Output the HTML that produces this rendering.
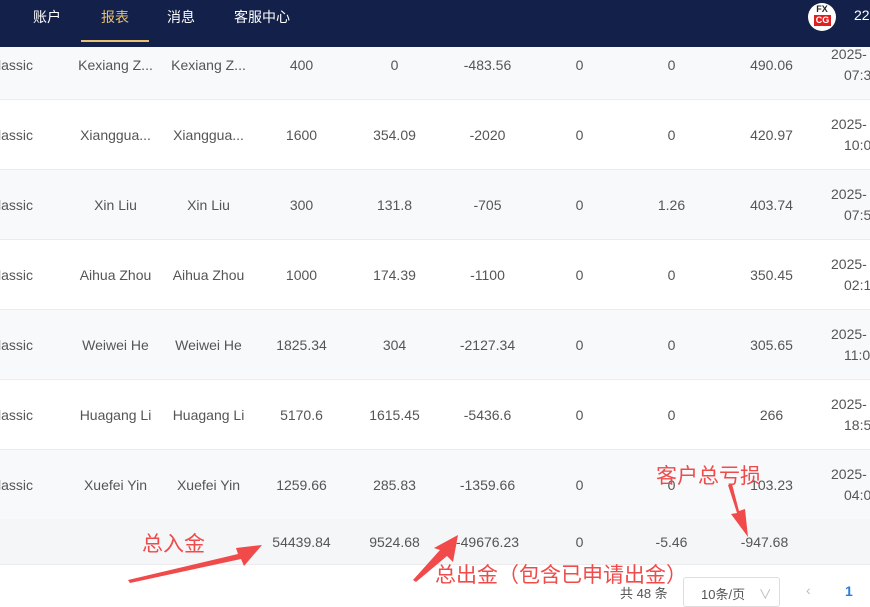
<!DOCTYPE html>
<html><head><meta charset="utf-8"><style>
*{margin:0;padding:0;box-sizing:border-box}
body{width:870px;height:600px;overflow:hidden;background:#fff;font-family:"Liberation Sans","Noto Sans CJK SC",sans-serif;color:#555;font-size:14px;position:relative}
.hd{position:absolute;left:0;top:0;width:870px;height:47px;background:#13214a;z-index:5}
.nav{position:absolute;top:7px;color:#fff;font-size:14px}
.row{position:absolute;left:0;width:870px;height:70px;border-bottom:1px solid #ececec}
.c{position:absolute;top:0;height:70px;line-height:70px;text-align:center;width:93px;white-space:nowrap}
.r{position:absolute;color:#f04a4a;font-size:21px;z-index:6}
</style></head><body>
<div class="hd">
<span class="nav" style="left:33px">账户</span>
<span class="nav" style="left:101px;color:#e8c070">报表</span>
<div style="position:absolute;left:81px;top:40px;width:68px;height:2px;background:#e8c070"></div>
<span class="nav" style="left:167px">消息</span>
<span class="nav" style="left:234px">客服中心</span>
<div style="position:absolute;left:808px;top:3px;width:28px;height:28px;border-radius:50%;background:#fff"></div>
<div style="position:absolute;left:814px;top:4px;font-size:9px;font-weight:bold;color:#222;width:16px;text-align:center">FX</div>
<div style="position:absolute;left:814px;top:15px;width:17px;height:11px;background:#e02020;color:#fff;font-size:9px;font-weight:bold;text-align:center;line-height:11px">CG</div>
<span class="nav" style="left:854px">22</span>
</div>
<div id="t"></div>
<script>
var d=[["Kexiang Z...","Kexiang Z...","400","0","-483.56","0","0","490.06","07:3"],
["Xianggua...","Xianggua...","1600","354.09","-2020","0","0","420.97","10:0"],
["Xin Liu","Xin Liu","300","131.8","-705","0","1.26","403.74","07:5"],
["Aihua Zhou","Aihua Zhou","1000","174.39","-1100","0","0","350.45","02:1"],
["Weiwei He","Weiwei He","1825.34","304","-2127.34","0","0","305.65","11:0"],
["Huagang Li","Huagang Li","5170.6","1615.45","-5436.6","0","0","266","18:5"],
["Xuefei Yin","Xuefei Yin","1259.66","285.83","-1359.66","0","0","103.23","04:0"]];
var cx=[115,208,301,394,487,579,671,771],h="";
d.forEach(function(r,i){var top=30+i*70;var bg=(i%2==0)?"#f8f9fb":"#fff";
h+='<div class="row" style="top:'+top+'px;background:'+bg+'"><div class="c" style="left:-2px;width:40px;text-align:left">lassic</div>';
for(var j=0;j<8;j++)h+='<div class="c" style="left:'+(cx[j]-46)+'px">'+r[j]+'</div>';
h+='<div style="position:absolute;left:831px;top:14px;line-height:21px">2025-<br><span style="padding-left:13px">'+r[8]+'</span></div></div>';});
var s=["54439.84","9524.68","-49676.23","0","-5.46","-947.68"],sx=[301,394,487,579,671,764];
h+='<div class="row" style="top:519px;height:46px;background:#f5f6f8">';
for(var j=0;j<6;j++)h+='<div class="c" style="left:'+(sx[j]-46)+'px;height:46px;line-height:46px">'+s[j]+'</div>';
h+='</div>';
document.getElementById('t').innerHTML=h;
</script>
<div style="position:absolute;left:620px;top:583px;font-size:13px">共 48 条</div>
<div style="position:absolute;left:683px;top:577px;width:97px;height:30px;border:1px solid #ddd;border-radius:3px;font-size:13px;padding:6px 0 0 17px">10条/页 <span style="color:#bbb;margin-left:10px">∨</span></div>
<div style="position:absolute;left:806px;top:582px;color:#bbb">‹</div>
<div style="position:absolute;left:845px;top:583px;color:#2b7de0;font-weight:bold">1</div>
<div class="r" style="left:142px;top:528px">总入金</div>
<div class="r" style="left:435px;top:559px">总出金（包含已申请出金）</div>
<div class="r" style="left:656px;top:460px">客户总亏损</div>
<svg style="position:absolute;left:0;top:0;z-index:6" width="870" height="600">
<g fill="#f04a4a"><polygon points="128,580 238,554 236,548 262,545 244,566 241,559 130,583"/>
<polygon points="413,580 440,550 434,548 458,535 453,562 447,556 416,582"/>
<polygon points="728,485 737,513 731,514 748,537 745,509 739,511 732,484"/></g>
</svg>
</body></html>
